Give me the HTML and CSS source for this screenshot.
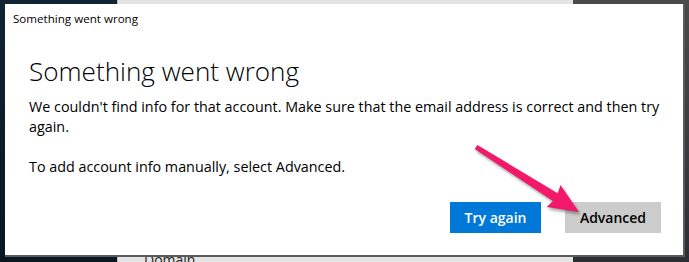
FILE: index.html
```html
<!DOCTYPE html>
<html>
<head>
<meta charset="utf-8">
<link rel="stylesheet" href="styles.css">
</head>
<body>
<div class="desktop">
  <div class="bg-window light"><span class="bg-label">Domain</span></div>
  <div class="bg-window dark"></div>
  <div class="dialog">
    <div class="titlebar">Something went wrong</div>
    <div class="content">
      <h1 class="heading">Something went wrong</h1>
      <p class="msg">We couldn't find info for that account. Make sure that the email address is correct and then try again.</p>
      <p class="msg">To add account info manually, select Advanced.</p>
      <div class="actions">
        <button class="btn primary">Try again</button>
        <button class="btn secondary">Advanced</button>
      </div>
    </div>
  </div>
  <svg class="arrow" width="689" height="262" viewBox="0 0 689 262">
    <defs>
      <filter id="sh" x="-20%" y="-20%" width="140%" height="140%">
        <feGaussianBlur stdDeviation="1.5"/>
      </filter>
    </defs>
    <polygon points="474.7,149.1 477.3,144.9 557.7,193.3 560.5,185 579,212 546.7,207 552.9,200.9" fill="#000" opacity="0.35" filter="url(#sh)" transform="translate(1.5,2.5)"/>
    <polygon points="474.7,149.1 477.3,144.9 557.7,193.3 560.5,185 579,212 546.7,207 552.9,200.9" fill="#f2186a"/>
  </svg>
</div>
</body>
</html>
```
FILE: styles.css
```css
* { box-sizing: border-box; }
html, body { margin: 0; padding: 0; }
body {
  width: 689px;
  height: 262px;
  overflow: hidden;
  font-family: "Open Sans", "Noto Sans", sans-serif;
}
.desktop {
  position: relative;
  width: 689px;
  height: 262px;
  background: linear-gradient(180deg, #102434 0%, #0a1620 100%);
}
.bg-window {
  position: absolute;
  top: 0;
  height: 262px;
}
.bg-window.light {
  left: 117px;
  width: 456px;
  background: #e4e4e4;
  border-left: 1px solid #bcbcbc;
}
.bg-label {
  position: absolute;
  left: 26px;
  bottom: -6px;
  font-size: 14px;
  line-height: 16px;
  color: #222;
}
.bg-window.dark {
  left: 573px;
  width: 116px;
  background: linear-gradient(180deg, #4a4a4a 0%, #3a3a40 60%, #2b2e36 100%);
}
.dialog {
  position: absolute;
  left: 5px;
  top: 4px;
  width: 680px;
  height: 253px;
  background: #fff;
  border-right: 2px solid #5a5a5a;
  border-bottom: 2px solid #5a5a5a;
  display: flex;
  flex-direction: column;
}
.titlebar {
  font-size: 11.6px;
  color: #000;
  padding: 7px 0 0 8px;
  height: 30px;
  line-height: 16px;
}
.content {
  padding: 0 0 0 24px;
  display: flex;
  flex-direction: column;
}
.heading {
  margin: 19px 0 0 0;
  font-size: 26.1px;
  font-weight: 300;
  line-height: 36px;
  color: #000;
}
.msg {
  margin: 8px 0 0 0;
  font-size: 14.35px;
  line-height: 20px;
  color: #000;
  width: 640px;
}
.msg + .msg { margin-top: 20px; }
.actions {
  display: flex;
  justify-content: flex-end;
  gap: 24px;
  margin: 25px 22px 0 0;
}
.btn {
  height: 31px;
  border: none;
  font-family: "Open Sans", "Noto Sans", sans-serif;
  font-size: 14px;
  font-weight: 600;
  padding: 0;
}
.btn.primary {
  width: 91px;
  background: #0078d7;
  color: #fff;
}
.btn.secondary {
  width: 96px;
  background: #cccccc;
  color: #000;
}
.arrow {
  position: absolute;
  left: 0;
  top: 0;
  pointer-events: none;
}
```
